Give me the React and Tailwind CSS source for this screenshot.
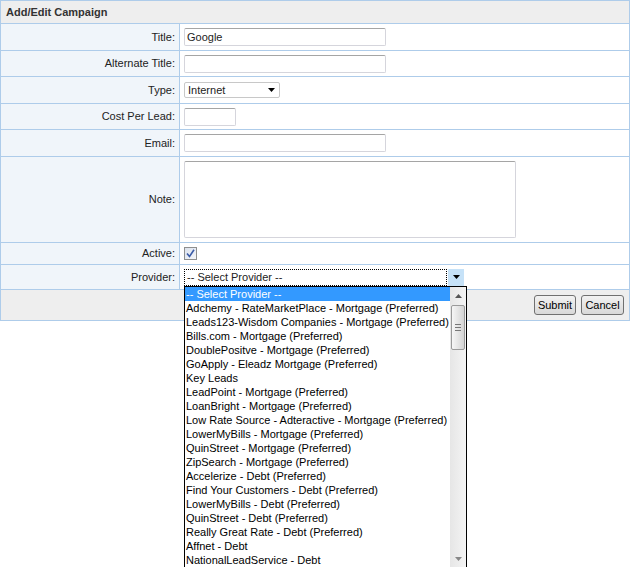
import React from 'react'

const providers = [
  'Adchemy - RateMarketPlace - Mortgage (Preferred)',
  'Leads123-Wisdom Companies - Mortgage (Preferred)',
  'Bills.com - Mortgage (Preferred)',
  'DoublePositve - Mortgage (Preferred)',
  'GoApply - Eleadz Mortgage (Preferred)',
  'Key Leads',
  'LeadPoint - Mortgage (Preferred)',
  'LoanBright - Mortgage (Preferred)',
  'Low Rate Source - Adteractive - Mortgage (Preferred)',
  'LowerMyBills - Mortgage (Preferred)',
  'QuinStreet - Mortgage (Preferred)',
  'ZipSearch - Mortgage (Preferred)',
  'Accelerize - Debt (Preferred)',
  'Find Your Customers - Debt (Preferred)',
  'LowerMyBills - Debt (Preferred)',
  'QuinStreet - Debt (Preferred)',
  'Really Great Rate - Debt (Preferred)',
  'Affnet - Debt',
  'NationalLeadService - Debt',
]

const Row = ({ label, h, children }) => (
  <div className={`flex border-b border-[#aeccea] ${h}`}>
    <div className="w-[179px] shrink-0 border-r border-[#aeccea] bg-[#f0f5fa] flex items-center justify-end pr-[4px]">
      {label}
    </div>
    <div className="flex-1 flex items-center pl-[4px]">{children}</div>
  </div>
)

const TextBox = ({ w, h = 'h-[18px]', value = '' }) => (
  <div className={`${w} ${h} border border-[#d5d5dc] border-t-[#a5a5a5] rounded-[2px] bg-white flex items-center px-[2px]`}>
    {value}
  </div>
)

const Arrow = ({ up, color = '#000' }) => (
  <svg width="7" height="4" viewBox="0 0 7 4">
    <polygon points={up ? '0,4 7,4 3.5,0' : '0,0 7,0 3.5,4'} fill={color} />
  </svg>
)

const App = () => {
  return (
    <div className="w-[630px] h-[567px] bg-white text-[11px] text-[#222] relative" style={{ fontFamily: '"Liberation Sans", Arial, sans-serif' }}>
      <div className="border border-[#aeccea]">
        <div className="h-[23px] bg-[#eeeeee] border-b border-[#aeccea] flex items-center pl-[5px] font-bold text-[11px] text-[#333]">
          Add/Edit Campaign
        </div>

        <Row label="Title:" h="h-[27px]">
          <TextBox w="w-[202px]" value="Google" />
        </Row>
        <Row label="Alternate Title:" h="h-[26px]">
          <TextBox w="w-[202px]" />
        </Row>
        <Row label="Type:" h="h-[27px]">
          <div className="w-[96px] h-[16px] border border-[#c8c8c8] rounded-[2px] bg-white flex items-center justify-between pl-[3px] pr-[4px]">
            <span>Internet</span>
            <Arrow />
          </div>
        </Row>
        <Row label="Cost Per Lead:" h="h-[26px]">
          <TextBox w="w-[52px]" />
        </Row>
        <Row label="Email:" h="h-[27px]">
          <TextBox w="w-[202px]" />
        </Row>
        <Row label="Note:" h="h-[86px]">
          <TextBox w="w-[332px]" h="h-[77px]" />
        </Row>
        <Row label="Active:" h="h-[22px]">
          <div className="w-[13px] h-[13px] border border-[#8e8f8f] bg-gradient-to-br from-[#dce2ec] to-[#f4f6fa] flex items-center justify-center">
            <svg width="9" height="9" viewBox="0 0 9 9">
              <path d="M1 4.5 L3.5 7.5 L8 0.8" stroke="#3b5ca8" strokeWidth="1.6" fill="none" />
            </svg>
          </div>
        </Row>
        <Row label="Provider:" h="h-[25px]">
          <div className="relative">
            <div className="flex h-[17px] w-[280px]">
              <div className="flex-1 border border-dotted border-black flex items-center pl-[2px]">-- Select Provider --</div>
              <div className="w-[16px] ml-[1px] bg-[#c6e2f8] flex items-center justify-center">
                <Arrow />
              </div>
            </div>
            <div className="absolute left-0 top-[17px] w-[283px] h-[282px] border border-black bg-white flex z-10">
              <div className="w-[265px] flex flex-col">
                <div className="h-[14px] leading-[14px] bg-[#3399ff] text-white pl-[1px]">-- Select Provider --</div>
                {providers.map((p) => (
                  <div key={p} className="h-[14px] leading-[14px] text-black pl-[1px] whitespace-nowrap">{p}</div>
                ))}
              </div>
              <div className="w-[16px] bg-gradient-to-r from-[#e6e6e6] to-[#f4f4f4] flex flex-col items-center">
                <div className="h-[18px] flex items-center justify-center">
                  <Arrow up color="#555" />
                </div>
                <div className="w-[14px] h-[45px] border border-[#9a9a9a] rounded-[2px] bg-gradient-to-r from-[#f6f6f6] to-[#d4d4d4] flex flex-col items-center justify-center gap-[2px]">
                  <div className="w-[6px] h-[1px] bg-[#777]" />
                  <div className="w-[6px] h-[1px] bg-[#777]" />
                  <div className="w-[6px] h-[1px] bg-[#777]" />
                </div>
                <div className="flex-1" />
                <div className="h-[16px] flex items-center justify-center">
                  <Arrow color="#888" />
                </div>
              </div>
            </div>
          </div>
        </Row>

        <div className="h-[30px] bg-[#eeeeee] flex items-center justify-end gap-[5px] pr-[5px]">
          <button className="w-[42px] h-[20px] border border-[#707070] rounded-[3px] bg-gradient-to-b from-[#f2f2f2] to-[#d8d8d8] text-[11px] text-black">Submit</button>
          <button className="w-[43px] h-[20px] border border-[#707070] rounded-[3px] bg-gradient-to-b from-[#f2f2f2] to-[#d8d8d8] text-[11px] text-black">Cancel</button>
        </div>
      </div>
    </div>
  )
}

export default App
